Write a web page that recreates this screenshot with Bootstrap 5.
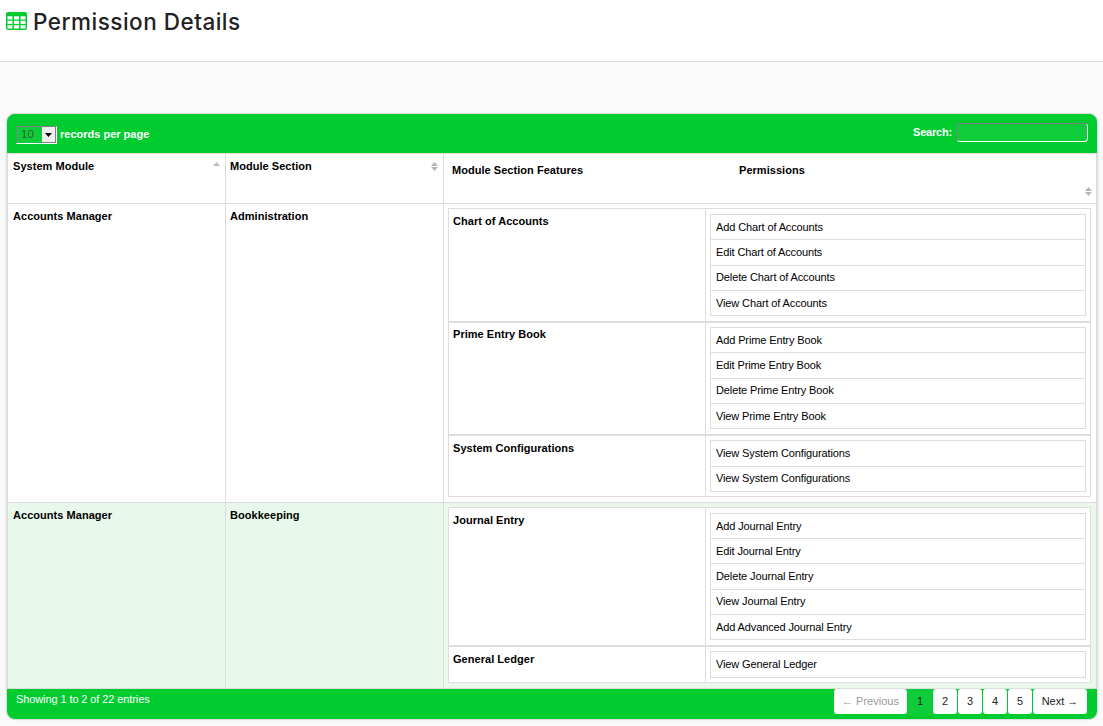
<!DOCTYPE html>
<html lang="en">
<head>
<meta charset="utf-8">
<meta name="viewport" content="width=device-width, initial-scale=1">
<title>Permission Details</title>
<link href="https://cdn.jsdelivr.net/npm/bootstrap@5.3.0/dist/css/bootstrap.min.css" rel="stylesheet">
<style>
  body { font-family: "Liberation Sans", Arial, sans-serif; font-size: 11px; line-height: 16px; color: #000; background: #fafafa; height: 726px; overflow: hidden; }
  .page-head { height: 62px; border-bottom: 1px solid #ddd; padding: 7px 6px; }
  .page-head h1 { font: 500 22.5px/30px Inter, sans-serif; letter-spacing: .5px; color: #222; margin: 0 0 0 6px; }
  .page-head svg { margin-top: 5px; }
  .panel { margin: 51px 5px 0 6px; border: 1px solid #ddd; border-radius: 9px; overflow: hidden; box-shadow: 0 0 3px rgba(0,0,0,.06); height: 607px; background: #00cc2f; }
  .bar-top { height: 39px; color: #fff; font-weight: 700; padding: 10px 9px 0 9px; letter-spacing: 0; }
  .len-box { width: 41px; height: 18px; margin-top: 2px; border: 1px solid; border-color: #808080 #fff #fff #808080; background: #0fcd3a; color: #24632f; font-size: 11.5px; line-height: 15px; font-weight: 400; }
  .len-box .arrow-btn { width: 14px; background: #f0eeee; border-right: 1px solid #808080; border-bottom: 1px solid #808080; }
  .len-text { margin-left: 3px; padding-top: 2px; }
  .find-label { letter-spacing: -.2px; }
  .find-box { width: 132px; height: 19px; border: 1px solid; border-color: #808080 #fff #fff #808080; border-radius: 4px; background: #0fcd3a; padding: 0; outline: 0; margin: -1px 0 0 4px; }
  .grid-table { display: grid; grid-template-columns: 218px 218px 652px; border: solid #ddd; border-width: 1px 1px 0; background: #fff; }
  .cell { border-bottom: 1px solid #ddd; border-right: 1px solid #ddd; padding: 4px 5px; font-weight: 700; letter-spacing: .04px; }
  .cell:nth-child(3n) { border-right: 0; }
  .cell:nth-child(3n+2) { padding-left: 4px; }
  .h-head { height: 50px; } .h-one { height: 299px; } .h-two { height: 186px; }
  .cell.head-last { padding: 8px 4px 7px 8px; }
  .head-feat { width: 287px; }
  .alt { background: #e8f8ea; }
  .cell.nest { padding: 4.4px 5px 0 4px; }
  .cell.nest.alt { padding-top: 4.2px; }
  .feat { border: 1px solid #ddd; background: #fff; width: 643px; }
  .feat-name { width: 257px; border-right: 1px solid #ddd; padding: 3.95px 4px; }
  .feat-perms { padding: 4.66px 4px 4.5px; }
  .perm-list { list-style: none; margin: 0; padding: 0; border: solid #ddd; border-width: 0 1px 1px; font-weight: 400; letter-spacing: -.12px; }
  .perm-list li { height: 25.25px; line-height: 23.72px; border-top: 1px solid #ddd; padding: .74px 0 0 5px; }
  .bar-foot { padding: 0 10px 0 9px; color: #fff; }
  .bar-foot .info { padding-top: 2px; letter-spacing: -.1px; }
  .pager { gap: 1px; }
  .pager .page-item .page-link { border: 0; border-radius: 3px; background: #fff; color: #222; font-size: 11px; line-height: 24px; height: 25px; width: 24px; padding: 0; text-align: center; margin: 0; }
  .pager .page-item.active .page-link { background: #0fcd3a; }
  .pager .page-item.disabled .page-link { color: #999; }
  .pager .page-item .prev-link { width: 73px; }
  .pager .page-item .next-link { width: 54px; }
</style>
</head>
<body>
<header class="page-head d-flex align-items-start bg-white">
  <svg width="21" height="18" viewBox="0 0 21 18"><rect width="21" height="18" rx="2" fill="#00cc2f"/><path fill="#fff" d="M1.500 4.200h5v3.300h-5zM8 4.200h5v3.300H8zM14.500 4.200h5v3.300h-5zM1.500 8.800h5v3.200h-5zM8 8.800h5v3.200H8zM14.500 8.800h5v3.200h-5zM1.500 13.300h5v3.200h-5zM8 13.300h5v3.200H8zM14.500 13.300h5v3.200h-5z"/></svg>
  <h1>Permission Details</h1>
</header>

<main class="panel">
  <div class="bar-top d-flex justify-content-between align-items-start">
    <div class="d-flex">
      <div class="len-box d-flex"><span class="flex-grow-1 ps-1">10</span><span class="arrow-btn d-flex align-items-center justify-content-center"><svg width="7" height="4"><path d="M0 0h7L3.500 4z"/></svg></span></div>
      <span class="len-text">records per page</span>
    </div>
    <label class="find-label d-flex">Search:<input class="find-box" type="text"></label>
  </div>

  <div class="grid-table">
    <div class="cell h-head d-flex justify-content-between"><span>System Module</span><svg width="7" height="9" class="mt-1"><path d="M0 4h7L3.500 0z" fill="#bbb"/></svg></div>
    <div class="cell h-head d-flex justify-content-between"><span>Module Section</span><svg width="7" height="9" class="mt-1"><path d="M0 4h7L3.500 0zM0 5h7L3.500 9z" fill="#b5b5b5"/></svg></div>
    <div class="cell h-head head-last d-flex"><span class="head-feat">Module Section Features</span><span class="flex-grow-1">Permissions</span><svg width="7" height="9" class="align-self-end"><path d="M0 4h7L3.500 0zM0 5h7L3.500 9z" fill="#b5b5b5"/></svg></div>

    <div class="cell h-one">Accounts Manager</div>
    <div class="cell h-one">Administration</div>
    <div class="cell h-one nest">
      <div class="feat d-flex"><div class="feat-name">Chart of Accounts</div><div class="feat-perms flex-grow-1"><ul class="perm-list"><li>Add Chart of Accounts</li><li>Edit Chart of Accounts</li><li>Delete Chart of Accounts</li><li>View Chart of Accounts</li></ul></div></div>
      <div class="feat d-flex"><div class="feat-name">Prime Entry Book</div><div class="feat-perms flex-grow-1"><ul class="perm-list"><li>Add Prime Entry Book</li><li>Edit Prime Entry Book</li><li>Delete Prime Entry Book</li><li>View Prime Entry Book</li></ul></div></div>
      <div class="feat d-flex"><div class="feat-name">System Configurations</div><div class="feat-perms flex-grow-1"><ul class="perm-list"><li>View System Configurations</li><li>View System Configurations</li></ul></div></div>
    </div>

    <div class="cell h-two alt">Accounts Manager</div>
    <div class="cell h-two alt">Bookkeeping</div>
    <div class="cell h-two nest alt">
      <div class="feat d-flex"><div class="feat-name">Journal Entry</div><div class="feat-perms flex-grow-1"><ul class="perm-list"><li>Add Journal Entry</li><li>Edit Journal Entry</li><li>Delete Journal Entry</li><li>View Journal Entry</li><li>Add Advanced Journal Entry</li></ul></div></div>
      <div class="feat d-flex"><div class="feat-name">General Ledger</div><div class="feat-perms flex-grow-1"><ul class="perm-list"><li>View General Ledger</li></ul></div></div>
    </div>
  </div>

  <footer class="bar-foot d-flex justify-content-between">
    <div class="info">Showing 1 to 2 of 22 entries</div>
    <ul class="pager pagination m-0">
      <li class="page-item disabled"><a class="page-link prev-link">← Previous</a></li>
      <li class="page-item active"><a class="page-link" href="#">1</a></li>
      <li class="page-item"><a class="page-link" href="#">2</a></li>
      <li class="page-item"><a class="page-link" href="#">3</a></li>
      <li class="page-item"><a class="page-link" href="#">4</a></li>
      <li class="page-item"><a class="page-link" href="#">5</a></li>
      <li class="page-item"><a class="page-link next-link" href="#">Next →</a></li>
    </ul>
  </footer>
</main>
<script src="https://cdn.jsdelivr.net/npm/bootstrap@5.3.0/dist/js/bootstrap.bundle.min.js"></script>
</body>
</html>
